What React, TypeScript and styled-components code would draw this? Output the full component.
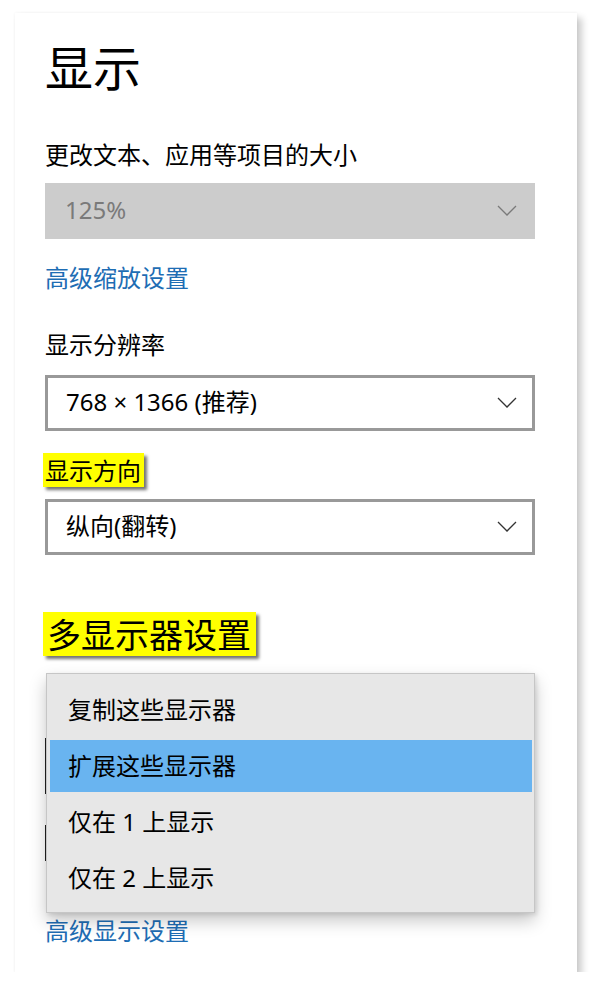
import React from "react";
import styled, { createGlobalStyle } from "styled-components";

const GlobalStyle = createGlobalStyle`
  html, body {
    margin: 0;
    padding: 0;
    background: #ffffff;
  }
  body {
    font-family: "Noto Sans", "Noto Sans CJK SC", sans-serif;
    color: #000000;
  }
`;

const menuItems = ["复制这些显示器", "扩展这些显示器", "仅在 1 上显示", "仅在 2 上显示"];

const Chevron = ({ color }: { color: string }) => (
  <svg width="20" height="11" viewBox="0 0 20 11">
    <polyline points="1,1 10,10 19,1" fill="none" stroke={color} strokeWidth="1.3" />
  </svg>
);

const DisplaySettings = () => {
  return (
    <Card>
      <Title>显示</Title>
      <Label $mt={43}>更改文本、应用等项目的大小</Label>
      <Select $variant="disabled" $mt={12}>
        <span>125%</span>
        <Chevron color="#7a7a7a" />
      </Select>
      <LinkText $mt={23}>高级缩放设置</LinkText>
      <Label $mt={35}>显示分辨率</Label>
      <Select $variant="normal" $mt={14}>
        <span>768 × 1366 (推荐)</span>
        <Chevron color="#333333" />
      </Select>
      <Marked $mt={22}>显示方向</Marked>
      <Select $variant="normal" $mt={12}>
        <span>纵向(翻转)</span>
        <Chevron color="#333333" />
      </Select>
      <MarkedHeading>多显示器设置</MarkedHeading>
      <HiddenSelect />
      <HiddenBox />
      <LinkText $mt={54}>高级显示设置</LinkText>

      <Popup>
        {menuItems.map((item, i) => (
          <MenuItem key={i} $active={i === 1}>
            {item}
          </MenuItem>
        ))}
      </Popup>
    </Card>
  );
};

const Card = styled.div`
  position: relative;
  margin: 13px 0 0 15px;
  width: 562px;
  box-sizing: border-box;
  padding: 27px 42px 25px 30px;
  background: #ffffff;
  box-shadow: 5px 5px 7px rgba(0, 0, 0, 0.2), 0 0 3px rgba(0, 0, 0, 0.06);
  display: flex;
  flex-direction: column;
  align-items: flex-start;
`;

const Title = styled.h1`
  margin: 0;
  font-size: 48px;
  line-height: 56px;
  font-weight: 400;
`;

const Label = styled.div<{ $mt: number }>`
  margin-top: ${(p) => p.$mt}px;
  font-size: 24px;
  line-height: 32px;
`;

const LinkText = styled.a<{ $mt: number }>`
  margin-top: ${(p) => p.$mt}px;
  font-size: 24px;
  line-height: 32px;
  color: #1e6db4;
  text-decoration: none;
  cursor: pointer;
`;

const Select = styled.div<{ $variant: "disabled" | "normal"; $mt: number }>`
  margin-top: ${(p) => p.$mt}px;
  width: 100%;
  height: 56px;
  box-sizing: border-box;
  display: flex;
  align-items: center;
  justify-content: space-between;
  font-size: 24px;
  line-height: 32px;
  background: ${(p) => (p.$variant === "disabled" ? "#cccccc" : "#ffffff")};
  color: ${(p) => (p.$variant === "disabled" ? "#7a7a7a" : "#000000")};
  border: ${(p) => (p.$variant === "disabled" ? "none" : "3px solid #999999")};
  padding: ${(p) => (p.$variant === "disabled" ? "0 18px 2px 20px" : "0 15px 2px 18px")};
  svg {
    flex-shrink: 0;
  }
`;

const Marked = styled.div<{ $mt: number }>`
  margin-top: ${(p) => p.$mt}px;
  margin-left: -2px;
  padding: 6px 3px 4px 2px;
  font-size: 24px;
  line-height: 24px;
  background: #ffff00;
  box-shadow: 3px 3px 3px rgba(0, 0, 0, 0.55);
`;

const MarkedHeading = styled.div`
  margin-top: 57px;
  margin-left: -2px;
  padding: 6px 5px 4px 4px;
  font-size: 34px;
  line-height: 34px;
  background: #ffff00;
  box-shadow: 3px 3px 3px rgba(0, 0, 0, 0.55);
`;

const HiddenSelect = styled.div`
  margin-top: 82px;
  width: 100%;
  height: 56px;
  box-sizing: border-box;
  border: 2px solid #222222;
`;

const HiddenBox = styled.div`
  margin-top: 31px;
  width: 100%;
  height: 36px;
  box-sizing: border-box;
  border: 2px solid #222222;
`;

const Popup = styled.div`
  position: absolute;
  top: 660px;
  left: 31px;
  width: 489px;
  box-sizing: border-box;
  display: flex;
  flex-direction: column;
  gap: 4px;
  padding: 10px 2px 8px 3px;
  background: #e7e7e7;
  border: 1px solid #c6c6c6;
  box-shadow: 0 8px 16px rgba(0, 0, 0, 0.22), 2px 2px 4px rgba(0, 0, 0, 0.1);
`;

const MenuItem = styled.div<{ $active: boolean }>`
  height: 52px;
  display: flex;
  align-items: center;
  padding-left: 18px;
  font-size: 24px;
  line-height: 32px;
  color: #000000;
  background: ${(p) => (p.$active ? "#69b4f0" : "transparent")};
`;

export default function App() {
  return (
    <>
      <GlobalStyle />
      <DisplaySettings />
    </>
  );
}
